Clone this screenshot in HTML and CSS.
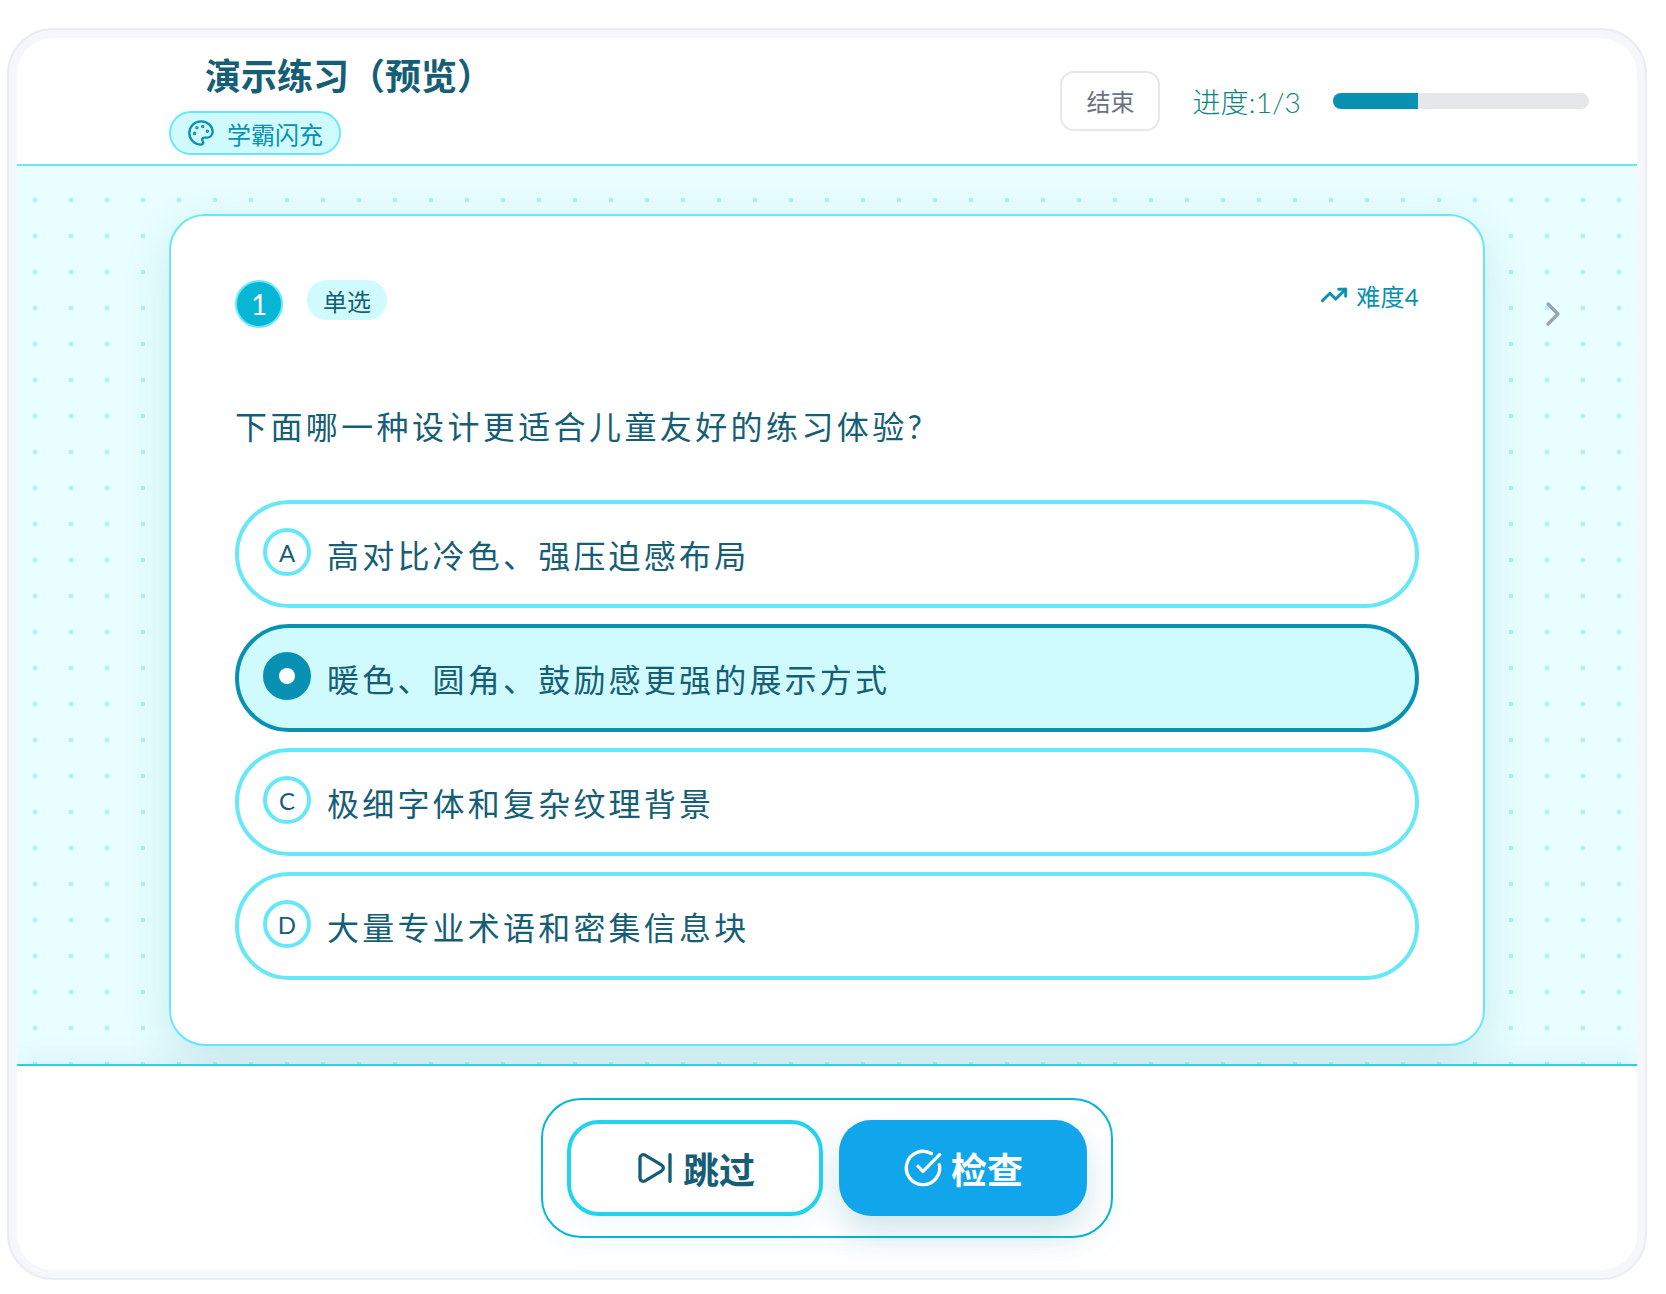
FILE: index.html
```html
<!DOCTYPE html>
<html lang="zh-CN">
<head>
  <meta charset="UTF-8">
  <meta name="viewport" content="width=device-width, initial-scale=1.0">
  <title>演示练习（预览）</title>
  <link rel="stylesheet" href="styles.css">
</head>
<body>
  <div class="frame">
    <div class="shell">
      <div class="header">
        <div class="header-left">
          <h1>演示练习（预览）</h1>
          <div class="theme-pill">
            <svg class="icon-palette" viewBox="0 0 24 24" fill="none" stroke="currentColor" stroke-width="2" stroke-linecap="round" stroke-linejoin="round">
              <path d="M12 22a1 1 0 0 1 0-20 10 9 0 0 1 10 9 5 5 0 0 1-5 5h-2.25a1.75 1.75 0 0 0-1.4 2.8l.3.4a1.75 1.75 0 0 1-1.4 2.8z"/>
              <circle cx="13.5" cy="6.5" r=".5" fill="currentColor"/>
              <circle cx="17.5" cy="10.5" r=".5" fill="currentColor"/>
              <circle cx="6.5" cy="12.5" r=".5" fill="currentColor"/>
              <circle cx="8.5" cy="7.5" r=".5" fill="currentColor"/>
            </svg>
            <span>学霸闪充</span>
          </div>
        </div>
        <div class="header-right">
          <button class="btn-end">结束</button>
          <div class="progress-text">进度:1/3</div>
          <div class="progress-bar"><div class="progress-fill"></div></div>
        </div>
      </div>

      <div class="main">
        <div class="card">
          <div class="card-head">
            <div class="card-tags">
              <div class="question-no">1</div>
              <div class="question-type">单选</div>
            </div>
            <div class="difficulty">
              <svg class="icon-trend" viewBox="0 0 24 24" fill="none" stroke="currentColor" stroke-width="2.5" stroke-linecap="round" stroke-linejoin="round">
                <path d="M16 7h6v6"/>
                <path d="m22 7-8.5 8.5-5-5L2 17"/>
              </svg>
              <span>难度4</span>
            </div>
          </div>

          <div class="question">下面哪一种设计更适合儿童友好的练习体验?</div>

          <div class="options">
            <div class="option">
              <div class="option-mark">A</div>
              <div class="option-text">高对比冷色、强压迫感布局</div>
            </div>
            <div class="option option-selected">
              <div class="option-mark"><span class="option-dot"></span></div>
              <div class="option-text">暖色、圆角、鼓励感更强的展示方式</div>
            </div>
            <div class="option">
              <div class="option-mark">C</div>
              <div class="option-text">极细字体和复杂纹理背景</div>
            </div>
            <div class="option">
              <div class="option-mark">D</div>
              <div class="option-text">大量专业术语和密集信息块</div>
            </div>
          </div>
        </div>

        <svg class="next-arrow" viewBox="0 0 24 24" fill="none" stroke="currentColor" stroke-width="2" stroke-linecap="round" stroke-linejoin="round">
          <path d="m9 18 6-6-6-6"/>
        </svg>
      </div>

      <div class="footer">
        <div class="action-group">
          <button class="btn btn-skip">
            <svg class="btn-icon" viewBox="0 0 24 24" fill="none" stroke="currentColor" stroke-width="2" stroke-linecap="round" stroke-linejoin="round">
              <path d="M21 4v16"/>
              <path d="M6.029 4.285A2 2 0 0 0 3 6v12a2 2 0 0 0 3.029 1.715l9.997-5.998a2 2 0 0 0 .003-3.432z"/>
            </svg>
            <span>跳过</span>
          </button>
          <button class="btn btn-check">
            <svg class="btn-icon" viewBox="0 0 24 24" fill="none" stroke="currentColor" stroke-width="2" stroke-linecap="round" stroke-linejoin="round">
              <path d="M21.801 10A10 10 0 1 1 17 3.335"/>
              <path d="m9 11 3 3L22 4"/>
            </svg>
            <span>检查</span>
          </button>
        </div>
      </div>
    </div>
  </div>
</body>
</html>
```

FILE: styles.css
```css
* {
  margin: 0;
  padding: 0;
  box-sizing: border-box;
}

body {
  padding: 28px 19px 15px 7px;
  background: white;
  font-family: Lato, "Noto Sans CJK SC", sans-serif;
  color: #155e75;
}

.frame {
  padding: 8px;
  background: #f5f7fa;
  border: 2px solid #e9edf3;
  border-radius: 46px;
}

.shell {
  background: white;
  border-radius: 36px;
  overflow: hidden;
}

.header {
  display: flex;
  justify-content: space-between;
  align-items: center;
  height: 128px;
  padding: 0 48px 1px 152px;
  border-bottom: 2px solid #67e8f9;
}

.header-left {
  display: flex;
  flex-direction: column;
  align-items: flex-start;
  gap: 13px;
  padding-top: 8px;
}

.header-left h1 {
  margin-left: 36px;
  font-size: 36px;
  line-height: 44px;
  font-weight: 700;
  color: #155e75;
}

.theme-pill {
  display: flex;
  align-items: center;
  gap: 12px;
  height: 44px;
  padding: 0 16px;
  background: #cffafe;
  border: 2px solid #67e8f9;
  border-radius: 22px;
  font-size: 24px;
  color: #0891b2;
}

.icon-palette {
  width: 28px;
  height: 28px;
}

.header-right {
  display: flex;
  align-items: center;
  gap: 32px;
}

.btn-end {
  width: 100px;
  height: 60px;
  background: white;
  border: 2px solid #e5e7eb;
  border-radius: 14px;
  font-family: inherit;
  font-size: 24px;
  color: #6b7280;
}

.progress-text {
  font-size: 28px;
  font-weight: 300;
  letter-spacing: 0.2px;
  color: #0b857b;
}

.progress-bar {
  width: 256px;
  height: 16px;
  background: #e5e7eb;
  border-radius: 8px;
  overflow: hidden;
}

.progress-fill {
  width: 33.33%;
  height: 100%;
  background: #0891b2;
}

.main {
  position: relative;
  height: 898px;
  padding: 48px 152px 18px;
  background-color: #e8feff;
  background-image: conic-gradient(at 4px 4px, transparent 75%, #a5f3fc 0);
  background-size: 36px 36px;
  background-position: 16px 32px;
}

.card {
  height: 832px;
  padding: 64px;
  background: white;
  border: 2px solid #67e8f9;
  border-radius: 36px;
  box-shadow: 0 16px 48px rgba(8, 110, 140, 0.14);
}

.card-head {
  display: flex;
  justify-content: space-between;
  align-items: flex-start;
}

.card-tags {
  display: flex;
  align-items: flex-start;
  gap: 24px;
}

.question-no {
  display: flex;
  align-items: center;
  justify-content: center;
  width: 48px;
  height: 48px;
  background: #06b6d4;
  border: 2px solid #67e8f9;
  border-radius: 50%;
  font-size: 28px;
  font-weight: 400;
  color: white;
}

.question-type {
  display: flex;
  align-items: center;
  justify-content: center;
  width: 80px;
  height: 40px;
  background: #cffafe;
  border-radius: 20px;
  font-size: 24px;
  color: #155e75;
}

.difficulty {
  display: flex;
  align-items: center;
  gap: 8px;
  height: 30px;
  font-size: 24px;
  letter-spacing: 0.3px;
  color: #0891b2;
}

.icon-trend {
  width: 28px;
  height: 28px;
}

.question {
  margin-top: 72px;
  margin-bottom: 46px;
  font-size: 32px;
  line-height: 54px;
  letter-spacing: 3.4px;
  color: #155e75;
}

.options {
  display: flex;
  flex-direction: column;
  gap: 16px;
}

.option {
  display: flex;
  align-items: center;
  gap: 16px;
  height: 108px;
  padding: 0 24px;
  background: white;
  border: 4px solid #67e8f9;
  border-radius: 54px;
}

.option-selected {
  background: #cffafe;
  border-color: #0891b2;
}

.option-mark {
  display: flex;
  align-items: center;
  justify-content: center;
  flex-shrink: 0;
  width: 48px;
  height: 48px;
  margin-top: -4px;
  background: white;
  border: 4px solid #67e8f9;
  border-radius: 50%;
  font-size: 24px;
  color: #155e75;
}

.option-selected .option-mark {
  background: #0891b2;
  border-color: #0891b2;
}

.option-dot {
  width: 16px;
  height: 16px;
  background: white;
  border-radius: 50%;
}

.option-text {
  padding-bottom: 1px;
  font-size: 32px;
  letter-spacing: 0.1em;
  color: #155e75;
}

.next-arrow {
  position: absolute;
  left: 1516px;
  top: 128px;
  width: 40px;
  height: 40px;
  color: #9ca3af;
}

.footer {
  position: relative;
  display: flex;
  justify-content: center;
  align-items: center;
  height: 206px;
  background: white;
  border-top: 2px solid #22d3ee;
  box-shadow: 0 -8px 24px rgba(100, 116, 139, 0.07);
}

.action-group {
  display: flex;
  gap: 16px;
  padding: 20px 24px;
  background: white;
  border: 2px solid #06b6d4;
  border-radius: 40px;
  box-shadow: 0 8px 32px rgba(8, 145, 178, 0.05);
}

.btn {
  display: flex;
  align-items: center;
  justify-content: center;
  gap: 8px;
  height: 96px;
  border-radius: 32px;
  font-family: inherit;
  font-size: 36px;
  font-weight: 700;
}

.btn-icon {
  width: 40px;
  height: 40px;
}

.btn-skip {
  width: 256px;
  background: white;
  border: 4px solid #22d3ee;
  color: #155e75;
  box-shadow: 0 8px 24px rgba(8, 145, 178, 0.06);
}

.btn-check {
  width: 248px;
  background: #11a6ec;
  border: none;
  color: white;
  box-shadow: 0 16px 32px rgba(8, 110, 140, 0.18);
}
```
